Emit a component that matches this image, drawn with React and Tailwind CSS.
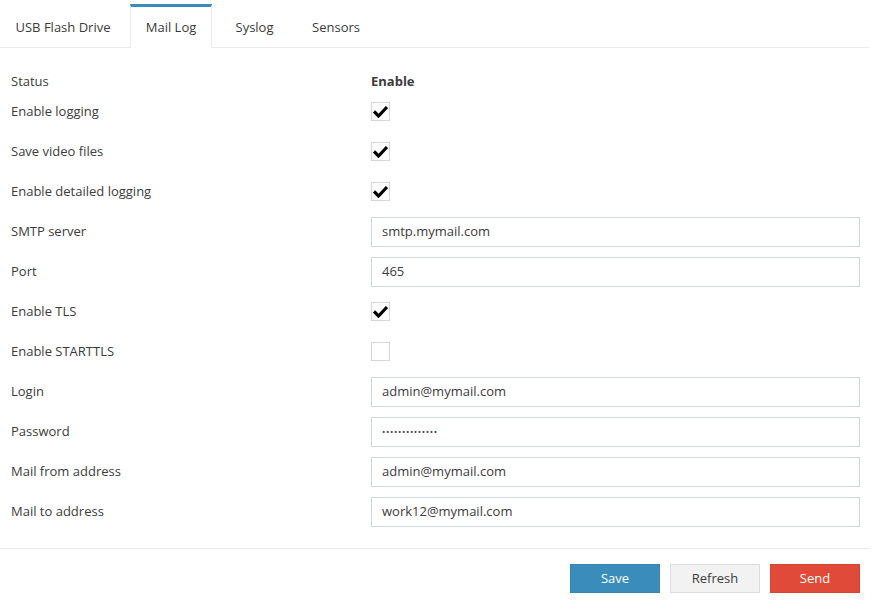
const TABS = [
  { name: 'USB Flash Drive', w: 'w-[126px]' },
  { name: 'Mail Log', w: 'w-[82px]' },
  { name: 'Syslog', w: 'w-[77px]' },
  { name: 'Sensors', w: 'w-[78px]' },
]

const ROWS = [
  { label: 'Enable logging', type: 'check', checked: true },
  { label: 'Save video files', type: 'check', checked: true },
  { label: 'Enable detailed logging', type: 'check', checked: true },
  { label: 'SMTP server', type: 'text', value: 'smtp.mymail.com' },
  { label: 'Port', type: 'text', value: '465' },
  { label: 'Enable TLS', type: 'check', checked: true },
  { label: 'Enable STARTTLS', type: 'check', checked: false },
  { label: 'Login', type: 'text', value: 'admin@mymail.com' },
  { label: 'Password', type: 'password', value: '••••••••••••••' },
  { label: 'Mail from address', type: 'text', value: 'admin@mymail.com' },
  { label: 'Mail to address', type: 'text', value: 'work12@mymail.com' },
]

function Checkbox({ checked }) {
  return (
    <div className="w-[19px] h-[19px] border border-[#d6d6d6] bg-white flex items-center justify-center">
      {checked && (
        <svg width="15" height="13" viewBox="0 0 15 13">
          <path d="M1 6.5 L5.5 11 L14 2" fill="none" stroke="#000" strokeWidth="3.2" strokeLinejoin="miter" />
        </svg>
      )}
    </div>
  )
}

export default function App() {
  return (
    <div className="w-[870px] bg-white text-[13px] text-[#3b3b3b] font-['Open_Sans',sans-serif]">
      {/* ── Tabs ── */}
      <div className="flex gap-[4px] h-[48px] border-b border-[#ececec]">
        {TABS.map((t) => {
          const active = t.name === 'Mail Log'
          return active ? (
            <div
              key={t.name}
              className={`${t.w} mt-[4px] h-[44px] border-t-[3px] border-t-[#3a8cbb] border-x border-x-[#ececec] bg-white flex items-center justify-center -mb-px pt-[1px]`}
            >
              {t.name}
            </div>
          ) : (
            <div key={t.name} className={`${t.w} mt-[4px] h-[44px] flex items-center justify-center pt-[3px]`}>
              {t.name}
            </div>
          )
        })}
      </div>

      {/* ── Form ── */}
      <div className="pl-[11px] pr-[10px] pt-[24px] pb-[17px]">
        <div className="flex items-center h-[19px]">
          <div className="w-[360px]">Status</div>
          <div className="font-bold">Enable</div>
        </div>
        {ROWS.map((r) => (
          <div key={r.label} className="flex items-center h-[40px]">
            <div className="w-[360px] shrink-0 pt-[2px]">{r.label}</div>
            {r.type === 'check' ? (
              <Checkbox checked={r.checked} />
            ) : (
              <div className="w-[489px] h-[30px] mt-[2px] border border-[#d3d7de] px-[10px] flex items-center">
                <span className={r.type === 'password' ? 'text-[9px] tracking-[0.6px] text-[#444]' : ''}>{r.value}</span>
              </div>
            )}
          </div>
        ))}
      </div>

      {/* ── Actions ── */}
      <div className="border-t border-[#ececec] flex justify-end gap-[10px] pt-[15px] pr-[10px]">
        <button className="w-[90px] h-[29px] bg-[#3a8cbb] border border-[#3584b2] text-white">Save</button>
        <button className="w-[90px] h-[29px] bg-[#f2f2f2] border border-[#dcdcdc] text-[#3b3b3b]">Refresh</button>
        <button className="w-[90px] h-[29px] bg-[#e04a39] border border-[#d64333] text-white">Send</button>
      </div>
    </div>
  )
}
